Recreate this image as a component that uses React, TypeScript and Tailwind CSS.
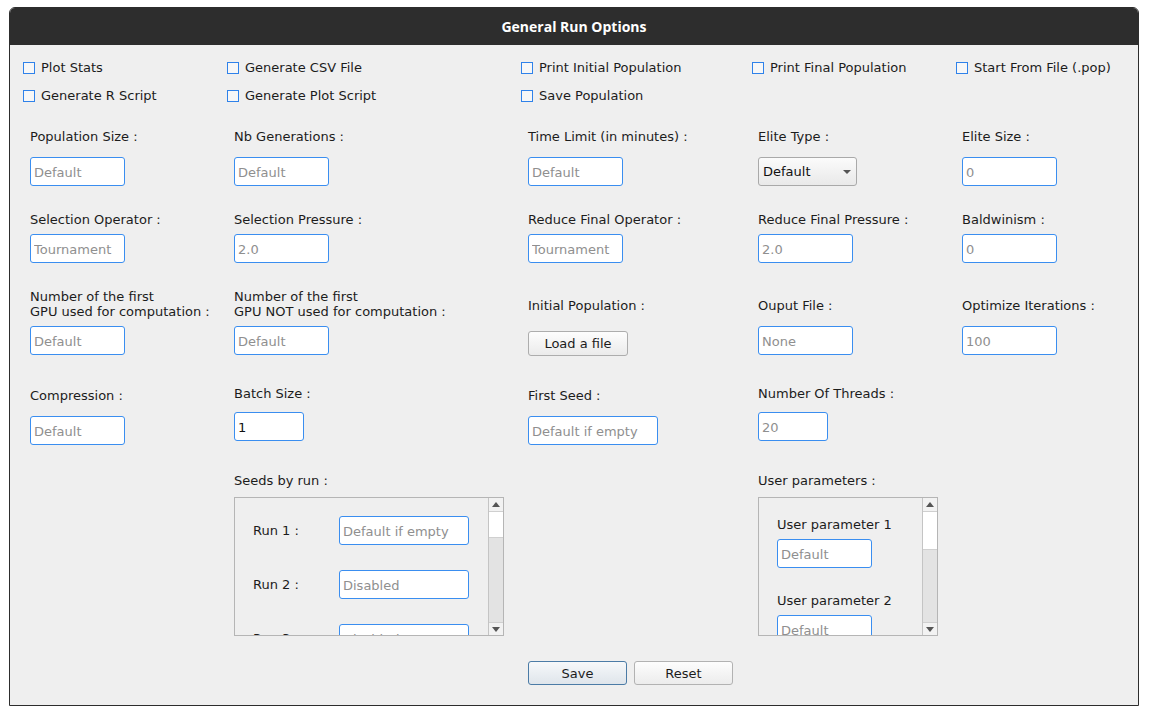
import React from "react";

const FONT = { fontFamily: '"DejaVu Sans", Verdana, sans-serif' };

const CHECKS_ROW1 = [
  "Plot Stats",
  "Generate CSV File",
  "Print Initial Population",
  "Print Final Population",
  "Start From File (.pop)",
];
const CHECKS_ROW2 = ["Generate R Script", "Generate Plot Script", "Save Population"];

function Check({ label }: { label: string }) {
  return (
    <label className="flex items-center gap-[6px] text-[13px] text-[#1c1c1c]">
      <span className="h-[12px] w-[12px] border border-[#2f82ea] bg-[#f7f7f7]" />
      {label}
    </label>
  );
}

function TextBox({
  placeholder,
  value,
  w = "w-[95px]",
}: {
  placeholder?: string;
  value?: string;
  w?: string;
}) {
  return (
    <input
      readOnly
      defaultValue={value}
      placeholder={placeholder}
      className={`${w} h-[29px] rounded-[3px] border border-[#3a8ef0] bg-white px-[3px] pt-[1px] text-[13px] text-[#111] outline-none placeholder:text-[#8f8f8f]`}
    />
  );
}

function Label({ children, className = "" }: { children: React.ReactNode; className?: string }) {
  return <div className={`text-[13px] leading-4 text-[#1c1c1c] ${className}`}>{children}</div>;
}

function ScrollBar({ thumb }: { thumb: string }) {
  return (
    <div className="flex w-[15px] flex-col border-l border-[#c4c4c4] bg-[#e3e3e3]">
      <div className="flex h-[14px] items-center justify-center border-b border-[#cfcfcf] bg-[#f2f2f2]">
        <svg width="8" height="5" viewBox="0 0 8 5">
          <path d="M0 5 L4 0 L8 5 Z" fill="#555" />
        </svg>
      </div>
      <div className={`${thumb} border-b border-[#d0d0d0] bg-white`} />
      <div className="flex-1" />
      <div className="flex h-[13px] items-center justify-center border-t border-[#cfcfcf] bg-[#f2f2f2]">
        <svg width="8" height="5" viewBox="0 0 8 5">
          <path d="M0 0 L8 0 L4 5 Z" fill="#555" />
        </svg>
      </div>
    </div>
  );
}

function Btn({ children, primary = false }: { children: React.ReactNode; primary?: boolean }) {
  return (
    <button
      className={
        primary
          ? "h-[24px] w-[99px] rounded-[3px] border border-[#4b7ba6] bg-gradient-to-b from-[#f6f8fa] to-[#dfe5eb] pt-[1px] text-[13px] text-[#1c1c1c]"
          : "h-[24px] w-[99px] rounded-[3px] border border-[#b2b2b2] bg-gradient-to-b from-[#fdfdfd] to-[#ececec] pt-[1px] text-[13px] text-[#1c1c1c]"
      }
    >
      {children}
    </button>
  );
}

export default function App() {
  const cols = "grid grid-cols-[204px_294px_230px_204px_1fr]";
  return (
    <div className="min-h-screen bg-white pt-[7px]" style={FONT}>
      <div className="ml-[9px] w-[1130px] overflow-hidden rounded-t-[6px] border border-[#2d2d2d]">
        <div
          className="flex h-[37px] items-center justify-center bg-[#2d2d2d] text-[14px] font-bold text-white"
          style={{ fontFamily: '"Open Sans", "DejaVu Sans", sans-serif' }}
        >
          General Run Options
        </div>

        <div className="h-[660px] bg-[#efefef]">
          {/* check boxes */}
          <div className="pt-[9px] pl-[13px]">
            <div className="grid h-[28px] grid-cols-[204px_294px_231px_204px_1fr] items-center">
              {CHECKS_ROW1.map((c) => (
                <Check key={c} label={c} />
              ))}
            </div>
            <div className="grid h-[28px] grid-cols-[204px_294px_231px_204px_1fr] items-center">
              {CHECKS_ROW2.map((c) => (
                <Check key={c} label={c} />
              ))}
            </div>
          </div>

          <div className="mt-[10px] pl-[20px]">
            {/* row 1 */}
            <div className={`${cols} h-[85px] items-start`}>
              {["Population Size :", "Nb Generations :", "Time Limit (in minutes) :"].map((l) => (
                <div key={l} className="flex flex-col pt-[9px]">
                  <Label>{l}</Label>
                  <div className="mt-[12px]">
                    <TextBox placeholder="Default" />
                  </div>
                </div>
              ))}
              <div className="flex flex-col pt-[9px]">
                <Label>Elite Type :</Label>
                <div className="mt-[12px] flex h-[29px] w-[99px] items-center justify-between rounded-[3px] border border-[#a9a9a9] bg-gradient-to-b from-[#fbfbfb] to-[#e9e9e9] pl-[4px] pr-[5px] pt-[1px] text-[13px] text-[#111]">
                  <span>Default</span>
                  <svg width="8" height="4" viewBox="0 0 8 4">
                    <path d="M0 0 L8 0 L4 4 Z" fill="#555" />
                  </svg>
                </div>
              </div>
              <div className="flex flex-col pt-[9px]">
                <Label>Elite Size :</Label>
                <div className="mt-[12px]">
                  <TextBox placeholder="0" />
                </div>
              </div>
            </div>

            {/* row 2 */}
            <div className={`${cols} h-[75px] items-start`}>
              {[
                ["Selection Operator :", "Tournament"],
                ["Selection Pressure :", "2.0"],
                ["Reduce Final Operator :", "Tournament"],
                ["Reduce Final Pressure :", "2.0"],
                ["Baldwinism :", "0"],
              ].map(([l, p]) => (
                <div key={l} className="flex flex-col pt-[7px]">
                  <Label>{l}</Label>
                  <div className="mt-[6px]">
                    <TextBox placeholder={p} />
                  </div>
                </div>
              ))}
            </div>

            {/* row 3 */}
            <div className={`${cols} h-[95px] items-start`}>
              <div className="flex flex-col pt-[9px]">
                <Label className="leading-[15px]">
                  Number of the first
                  <br />
                  GPU used for computation :
                </Label>
                <div className="mt-[7px]">
                  <TextBox placeholder="Default" />
                </div>
              </div>
              <div className="flex flex-col pt-[9px]">
                <Label className="leading-[15px]">
                  Number of the first
                  <br />
                  GPU NOT used for computation :
                </Label>
                <div className="mt-[7px]">
                  <TextBox placeholder="Default" />
                </div>
              </div>
              <div className="flex flex-col pt-[18px]">
                <Label>Initial Population :</Label>
                <div className="mt-[17px]">
                  <button className="h-[25px] w-[100px] rounded-[3px] border border-[#adadad] bg-gradient-to-b from-[#fdfdfd] to-[#ebebeb] pt-[1px] text-[13px] text-[#1c1c1c]">
                    Load a file
                  </button>
                </div>
              </div>
              <div className="flex flex-col pt-[18px]">
                <Label>Ouput File :</Label>
                <div className="mt-[12px]">
                  <TextBox placeholder="None" />
                </div>
              </div>
              <div className="flex flex-col pt-[18px]">
                <Label>Optimize Iterations :</Label>
                <div className="mt-[12px]">
                  <TextBox placeholder="100" />
                </div>
              </div>
            </div>

            {/* row 4 */}
            <div className={`${cols} h-[90px] items-start`}>
              <div className="flex flex-col pt-[13px]">
                <Label>Compression :</Label>
                <div className="mt-[12px]">
                  <TextBox placeholder="Default" />
                </div>
              </div>
              <div className="flex flex-col pt-[11px]">
                <Label>Batch Size :</Label>
                <div className="mt-[10px]">
                  <TextBox value="1" w="w-[70px]" />
                </div>
              </div>
              <div className="flex flex-col pt-[13px]">
                <Label>First Seed :</Label>
                <div className="mt-[12px]">
                  <TextBox placeholder="Default if empty" w="w-[130px]" />
                </div>
              </div>
              <div className="flex flex-col pt-[11px]">
                <Label>Number Of Threads :</Label>
                <div className="mt-[10px]">
                  <TextBox placeholder="20" w="w-[70px]" />
                </div>
              </div>
              <div />
            </div>

            {/* row 5 */}
            <div className={`${cols} h-[171px] items-start`}>
              <div />
              <div className="flex flex-col pt-[8px]">
                <Label>Seeds by run :</Label>
                <div className="mt-[8px] flex h-[139px] w-[270px] overflow-hidden border border-[#b5b5b5]">
                  <div className="flex-1 overflow-hidden pt-[18px] pl-[18px]">
                    {[
                      ["Run 1 :", "Default if empty"],
                      ["Run 2 :", "Disabled"],
                      ["Run 3 :", "Disabled"],
                    ].map(([l, p]) => (
                      <div key={l} className="mb-[25px] flex items-start">
                        <span className="w-[86px] pt-[7px] text-[13px] leading-4 text-[#1c1c1c]">{l}</span>
                        <TextBox placeholder={p} w="w-[130px]" />
                      </div>
                    ))}
                  </div>
                  <ScrollBar thumb="h-[26px]" />
                </div>
              </div>
              <div />
              <div className="flex flex-col pt-[8px]">
                <Label>User parameters :</Label>
                <div className="mt-[8px] flex h-[139px] w-[180px] overflow-hidden border border-[#b5b5b5]">
                  <div className="flex-1 overflow-hidden pt-[19px] pl-[18px]">
                    {["User parameter 1", "User parameter 2"].map((l) => (
                      <div key={l} className="mb-[25px] flex flex-col">
                        <Label>{l}</Label>
                        <div className="mt-[6px]">
                          <TextBox placeholder="Default" />
                        </div>
                      </div>
                    ))}
                  </div>
                  <ScrollBar thumb="h-[38px]" />
                </div>
              </div>
              <div />
            </div>

            {/* buttons */}
            <div className={`${cols} mt-[25px]`}>
              <div />
              <div />
              <div className="col-span-2 flex gap-[7px]">
                <Btn primary>Save</Btn>
                <Btn>Reset</Btn>
              </div>
            </div>
          </div>
        </div>
      </div>
    </div>
  );
}
